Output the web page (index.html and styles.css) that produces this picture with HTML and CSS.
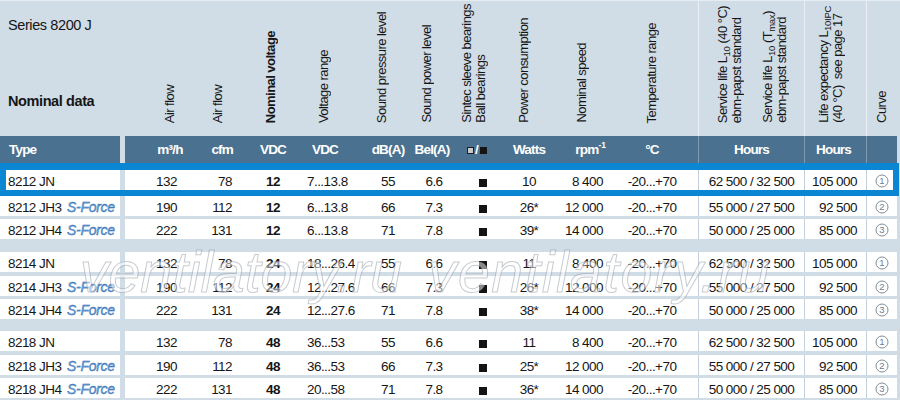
FILE: index.html
```html
<!DOCTYPE html>
<html>
<head>
<meta charset="utf-8">
<link rel="stylesheet" href="styles.css">
</head>
<body>
<div class="sheet">
  <div class="head grid">
    <div class="t titles"><div class="series">Series 8200 J</div><div class="nominal">Nominal data</div></div>
    <div class="gapcol"></div>
    <div class="a"><span class="rot">Air flow</span></div>
    <div class="b"><span class="rot">Air flow</span></div>
    <div class="c"><span class="rot bold">Nominal voltage</span></div>
    <div class="d"><span class="rot">Voltage range</span></div>
    <div class="e"><span class="rot">Sound pressure level</span></div>
    <div class="f"><span class="rot">Sound power level</span></div>
    <div class="g"><span class="rot">Sintec sleeve bearings<br>Ball bearings</span></div>
    <div class="h"><span class="rot">Power consumption</span></div>
    <div class="i"><span class="rot">Nominal speed</span></div>
    <div class="j"><span class="rot">Temperature range</span></div>
    <div class="k sep"><span class="rot">Service life L<sub>10</sub> (40 °C)<br>ebm-papst standard</span><span class="rot">Service life L<sub>10</sub> (T<sub>max</sub>)<br>ebm-papst standard</span></div>
    <div class="l sep"><span class="rot">Life expectancy L<sub>10IPC</sub><br>(40 °C)&nbsp; see page 17</span></div>
    <div class="m sep"><span class="rot">Curve</span></div>
  </div>

  <div class="bar grid">
    <div class="t">Type</div>
    <div class="gapcol"></div>
    <div class="a">m³/h</div>
    <div class="b">cfm</div>
    <div class="c">VDC</div>
    <div class="d">VDC</div>
    <div class="e">dB(A)</div>
    <div class="f">Bel(A)</div>
    <div class="g"><i class="sq sq-grey"></i>/<i class="sq sq-black"></i></div>
    <div class="h">Watts</div>
    <div class="i">rpm<sup>-1</sup></div>
    <div class="j">°C</div>
    <div class="k sep">Hours</div>
    <div class="l sep">Hours</div>
    <div class="m sep"></div>
  </div>

  <div class="group g1">
    <div class="row grid">
      <div class="t"><span class="nm">8212 JN</span></div><div class="gapcol"></div>
      <div class="a">132</div><div class="b">78</div><div class="c">12</div><div class="d">7...13.8</div><div class="e">55</div><div class="f">6.6</div><div class="g"><i class="dot"></i></div><div class="h">10</div><div class="i">8 400</div><div class="j">-20...+70</div><div class="k sep">62 500 / 32 500</div><div class="l sep">105 000</div>
      <div class="m sep"><svg class="cv" width="14" height="14" viewBox="0 0 14 14"><circle cx="7" cy="7" r="6" fill="none" stroke="#7f8c99" stroke-width="1"/><text x="7" y="10.4" text-anchor="middle">1</text></svg></div>
    </div>
    <div class="row grid second">
      <div class="t"><span class="nm">8212 JH3</span><span class="sf">S-Force</span></div><div class="gapcol"></div>
      <div class="a">190</div><div class="b">112</div><div class="c">12</div><div class="d">6...13.8</div><div class="e">66</div><div class="f">7.3</div><div class="g"><i class="dot"></i></div><div class="h">26*</div><div class="i">12 000</div><div class="j">-20...+70</div><div class="k sep">55 000 / 27 500</div><div class="l sep">92 500</div>
      <div class="m sep"><svg class="cv" width="14" height="14" viewBox="0 0 14 14"><circle cx="7" cy="7" r="6" fill="none" stroke="#7f8c99" stroke-width="1"/><text x="7" y="10.4" text-anchor="middle">2</text></svg></div>
    </div>
    <div class="row grid">
      <div class="t"><span class="nm">8212 JH4</span><span class="sf">S-Force</span></div><div class="gapcol"></div>
      <div class="a">222</div><div class="b">131</div><div class="c">12</div><div class="d">6...13.8</div><div class="e">71</div><div class="f">7.8</div><div class="g"><i class="dot"></i></div><div class="h">39*</div><div class="i">14 000</div><div class="j">-20...+70</div><div class="k sep">50 000 / 25 000</div><div class="l sep">85 000</div>
      <div class="m sep"><svg class="cv" width="14" height="14" viewBox="0 0 14 14"><circle cx="7" cy="7" r="6" fill="none" stroke="#7f8c99" stroke-width="1"/><text x="7" y="10.4" text-anchor="middle">3</text></svg></div>
    </div>
  </div>

  <div class="group g2">
    <div class="row grid">
      <div class="t"><span class="nm">8214 JN</span></div><div class="gapcol"></div>
      <div class="a">132</div><div class="b">78</div><div class="c">24</div><div class="d">18...26.4</div><div class="e">55</div><div class="f">6.6</div><div class="g"><i class="dot"></i></div><div class="h">11</div><div class="i">8 400</div><div class="j">-20...+70</div><div class="k sep">62 500 / 32 500</div><div class="l sep">105 000</div>
      <div class="m sep"><svg class="cv" width="14" height="14" viewBox="0 0 14 14"><circle cx="7" cy="7" r="6" fill="none" stroke="#7f8c99" stroke-width="1"/><text x="7" y="10.4" text-anchor="middle">1</text></svg></div>
    </div>
    <div class="row grid">
      <div class="t"><span class="nm">8214 JH3</span><span class="sf">S-Force</span></div><div class="gapcol"></div>
      <div class="a">190</div><div class="b">112</div><div class="c">24</div><div class="d">12...27.6</div><div class="e">66</div><div class="f">7.3</div><div class="g"><i class="dot"></i></div><div class="h">26*</div><div class="i">12 000</div><div class="j">-20...+70</div><div class="k sep">55 000 / 27 500</div><div class="l sep">92 500</div>
      <div class="m sep"><svg class="cv" width="14" height="14" viewBox="0 0 14 14"><circle cx="7" cy="7" r="6" fill="none" stroke="#7f8c99" stroke-width="1"/><text x="7" y="10.4" text-anchor="middle">2</text></svg></div>
    </div>
    <div class="row grid">
      <div class="t"><span class="nm">8214 JH4</span><span class="sf">S-Force</span></div><div class="gapcol"></div>
      <div class="a">222</div><div class="b">131</div><div class="c">24</div><div class="d">12...27.6</div><div class="e">71</div><div class="f">7.8</div><div class="g"><i class="dot"></i></div><div class="h">38*</div><div class="i">14 000</div><div class="j">-20...+70</div><div class="k sep">50 000 / 25 000</div><div class="l sep">85 000</div>
      <div class="m sep"><svg class="cv" width="14" height="14" viewBox="0 0 14 14"><circle cx="7" cy="7" r="6" fill="none" stroke="#7f8c99" stroke-width="1"/><text x="7" y="10.4" text-anchor="middle">3</text></svg></div>
    </div>
  </div>

  <div class="group g3">
    <div class="row grid">
      <div class="t"><span class="nm">8218 JN</span></div><div class="gapcol"></div>
      <div class="a">132</div><div class="b">78</div><div class="c">48</div><div class="d">36...53</div><div class="e">55</div><div class="f">6.6</div><div class="g"><i class="dot"></i></div><div class="h">11</div><div class="i">8 400</div><div class="j">-20...+70</div><div class="k sep">62 500 / 32 500</div><div class="l sep">105 000</div>
      <div class="m sep"><svg class="cv" width="14" height="14" viewBox="0 0 14 14"><circle cx="7" cy="7" r="6" fill="none" stroke="#7f8c99" stroke-width="1"/><text x="7" y="10.4" text-anchor="middle">1</text></svg></div>
    </div>
    <div class="row grid">
      <div class="t"><span class="nm">8218 JH3</span><span class="sf">S-Force</span></div><div class="gapcol"></div>
      <div class="a">190</div><div class="b">112</div><div class="c">48</div><div class="d">36...53</div><div class="e">66</div><div class="f">7.3</div><div class="g"><i class="dot"></i></div><div class="h">25*</div><div class="i">12 000</div><div class="j">-20...+70</div><div class="k sep">55 000 / 27 500</div><div class="l sep">92 500</div>
      <div class="m sep"><svg class="cv" width="14" height="14" viewBox="0 0 14 14"><circle cx="7" cy="7" r="6" fill="none" stroke="#7f8c99" stroke-width="1"/><text x="7" y="10.4" text-anchor="middle">2</text></svg></div>
    </div>
    <div class="row grid">
      <div class="t"><span class="nm">8218 JH4</span><span class="sf">S-Force</span></div><div class="gapcol"></div>
      <div class="a">222</div><div class="b">131</div><div class="c">48</div><div class="d">20...58</div><div class="e">71</div><div class="f">7.8</div><div class="g"><i class="dot"></i></div><div class="h">36*</div><div class="i">14 000</div><div class="j">-20...+70</div><div class="k sep">50 000 / 25 000</div><div class="l sep">85 000</div>
      <div class="m sep"><svg class="cv" width="14" height="14" viewBox="0 0 14 14"><circle cx="7" cy="7" r="6" fill="none" stroke="#7f8c99" stroke-width="1"/><text x="7" y="10.4" text-anchor="middle">3</text></svg></div>
    </div>
  </div>

  <div class="highlight"></div>
  <div class="wm wm1">ventilatory.ru</div>
  <div class="wm wm2">ventilatory.ru</div>
</div>
</body>
</html>
```

FILE: styles.css
```css
* { box-sizing: border-box; }
html, body { margin: 0; padding: 0; }
body {
  width: 900px;
  height: 400px;
  overflow: hidden;
  background: #d0dce6;
  font-family: "Liberation Sans", Arial, sans-serif;
  color: #161616;
}
.sheet { position: relative; width: 900px; height: 400px; border-top: 1px solid #e6edf2; }

.grid {
  display: grid;
  grid-template-columns: 120px 5px 71px 52px 50px 66px 48px 44px 54px 38px 62px 88px 106px 62px 31px;
  width: 897px;
}

/* ---------- top header with rotated labels ---------- */
.head { height: 135px; grid-template-rows: 135px; }
.head > div {
  display: flex;
  align-items: flex-end;
  justify-content: center;
  padding-bottom: 13px;
}
.head > .titles {
  display: block;
  padding: 14.5px 0 0 8px;
}
.series { font-size: 14.5px; line-height: 18px; letter-spacing: -0.4px; }
.nominal { font-size: 14.5px; line-height: 18px; font-weight: bold; letter-spacing: -0.4px; margin-top: 58.5px; }

.rot {
  writing-mode: vertical-rl;
  transform: rotate(180deg);
  font-size: 13px;
  line-height: 14px;
  letter-spacing: -0.55px;
  white-space: nowrap;
}
.rot sub { font-size: 9.5px; line-height: 0; vertical-align: sub; letter-spacing: -0.3px; }
.bold { font-weight: bold; }

.head .a { padding-left: 19px; }
.head .b { padding-right: 8px; }
.head .c { padding-right: 4px; }
.head .d { padding-right: 14px; }
.head .e { padding-right: 12px; }
.head .f { padding-right: 14px; }
.head .g { padding-right: 18px; }
.head .h { padding-right: 10px; }
.head .i { padding-left: 6px; }
.head .j { padding-right: 4px; }
.head .k { gap: 17px; padding-left: 1px; }
.head .l { padding-right: 9px; }
.head .sep { border-left: 1px solid #e8eef3; }

/* ---------- dark header bar ---------- */
.bar > div {
  height: 27px;
  line-height: 27px;
  font-size: 13.5px;
  font-weight: bold;
  letter-spacing: -0.8px;
  color: #ffffff;
  background: #4a7290;
  text-align: center;
  white-space: nowrap;
}
.bar > .gapcol { background: transparent; }
.bar .t { text-align: left; padding-left: 9px; }
.bar .a { padding-left: 19px; }
.bar .b { text-align: right; padding-right: 15px; }
.bar .d { padding-right: 12px; }
.bar .f { padding-right: 4px; }
.bar .g { padding-right: 12px; letter-spacing: 0; }
.bar .i { text-align: right; padding-right: 4px; }
.bar .j { padding-right: 4px; }
.bar .l { padding-right: 4px; }
.bar .sep { border-left: 1px solid #7f9bb1; }
.bar sup { font-size: 8.5px; line-height: 0; vertical-align: 6px; letter-spacing: 0; }

.sq { display: inline-block; width: 7px; height: 7px; vertical-align: 0; margin: 0 1px; }
.sq-grey { background: #c9c9c9; border: 1px solid #1e1e1e; }
.sq-black { background: #141414; }

/* ---------- data rows ---------- */
.group.g1 { margin-top: 7px; }
.group.g2 { margin-top: 13px; }
.group.g3 { margin-top: 12px; }
.row { margin-top: 3.5px; }
.row:first-child { margin-top: 0; }
.row.second { margin-top: 5.5px; }

.row > div {
  height: 20px;
  padding-top: 3px;
  line-height: 17px;
  font-size: 13.5px;
  letter-spacing: -0.55px;
  background: #ffffff;
  white-space: nowrap;
  text-align: center;
}
.row > .gapcol { background: transparent; }
.row .t { text-align: left; padding-left: 8px; }
.row .a { padding-left: 12px; }
.row .b { text-align: right; padding-right: 16px; }
.row .c { font-weight: bold; }
.row .d { text-align: left; padding-left: 9px; }
.row .i { text-align: right; padding-right: 7px; }
.row .j { padding-right: 4px; }
.row .l { text-align: right; padding-right: 9px; }
.row .m { padding-top: 0; }
.row .sep { border-left: 1px solid #c4d1dc; }

.cv { display: block; margin: 4px auto 0; }
.cv text { font-family: "Liberation Sans", Arial, sans-serif; font-size: 9.5px; fill: #6f7d8a; letter-spacing: 0; }

.nm { display: inline-block; width: 59px; }
.sf {
  font-style: italic;
  font-size: 14px;
  letter-spacing: -0.3px;
  color: #6a9fd8;
  -webkit-text-stroke: 0.35px #2262a8;
}
.dot { display: inline-block; width: 8px; height: 8px; background: #141414; vertical-align: -1px; }

/* ---------- overlays ---------- */
.highlight {
  position: absolute;
  left: 0;
  top: 162px;
  width: 899px;
  height: 33px;
  border: 6px solid #0b86d3;
  border-top-width: 7px;
  pointer-events: none;
}
.wm {
  position: absolute;
  top: 240px;
  font-style: italic;
  font-size: 57px;
  line-height: 62px;
  color: rgba(255, 255, 255, 0.5);
  -webkit-text-stroke: 1px rgba(130, 140, 150, 0.45);
  white-space: nowrap;
  pointer-events: none;
}
.wm1 { left: 80px; }
.wm2 { left: 428px; letter-spacing: 1.5px; }
```
